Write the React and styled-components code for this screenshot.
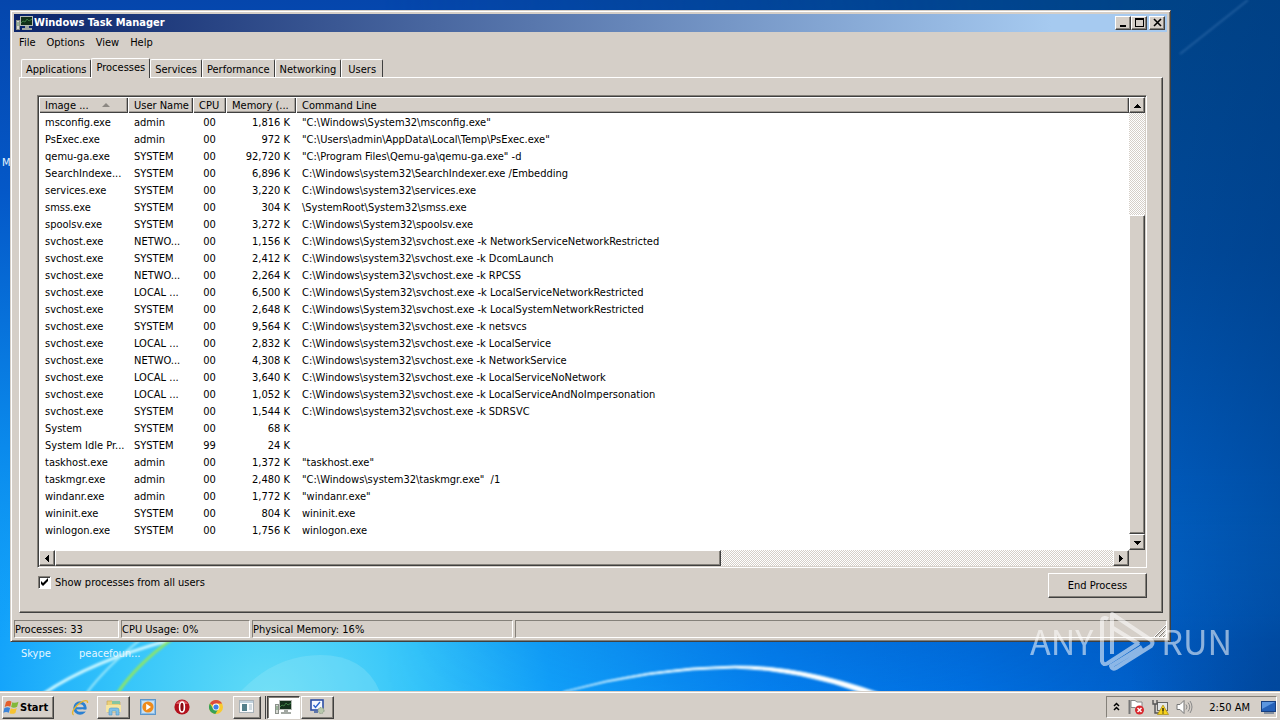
import React from "react";
import styled, { createGlobalStyle, css } from "styled-components";

const processes = [
  ["msconfig.exe", "admin", "00", "1,816 K", '"C:\\Windows\\System32\\msconfig.exe"'],
  ["PsExec.exe", "admin", "00", "972 K", '"C:\\Users\\admin\\AppData\\Local\\Temp\\PsExec.exe"'],
  ["qemu-ga.exe", "SYSTEM", "00", "92,720 K", '"C:\\Program Files\\Qemu-ga\\qemu-ga.exe" -d'],
  ["SearchIndexe...", "SYSTEM", "00", "6,896 K", "C:\\Windows\\system32\\SearchIndexer.exe /Embedding"],
  ["services.exe", "SYSTEM", "00", "3,220 K", "C:\\Windows\\system32\\services.exe"],
  ["smss.exe", "SYSTEM", "00", "304 K", "\\SystemRoot\\System32\\smss.exe"],
  ["spoolsv.exe", "SYSTEM", "00", "3,272 K", "C:\\Windows\\System32\\spoolsv.exe"],
  ["svchost.exe", "NETWO...", "00", "1,156 K", "C:\\Windows\\System32\\svchost.exe -k NetworkServiceNetworkRestricted"],
  ["svchost.exe", "SYSTEM", "00", "2,412 K", "C:\\Windows\\system32\\svchost.exe -k DcomLaunch"],
  ["svchost.exe", "NETWO...", "00", "2,264 K", "C:\\Windows\\system32\\svchost.exe -k RPCSS"],
  ["svchost.exe", "LOCAL ...", "00", "6,500 K", "C:\\Windows\\System32\\svchost.exe -k LocalServiceNetworkRestricted"],
  ["svchost.exe", "SYSTEM", "00", "2,648 K", "C:\\Windows\\System32\\svchost.exe -k LocalSystemNetworkRestricted"],
  ["svchost.exe", "SYSTEM", "00", "9,564 K", "C:\\Windows\\system32\\svchost.exe -k netsvcs"],
  ["svchost.exe", "LOCAL ...", "00", "2,832 K", "C:\\Windows\\system32\\svchost.exe -k LocalService"],
  ["svchost.exe", "NETWO...", "00", "4,308 K", "C:\\Windows\\system32\\svchost.exe -k NetworkService"],
  ["svchost.exe", "LOCAL ...", "00", "3,640 K", "C:\\Windows\\system32\\svchost.exe -k LocalServiceNoNetwork"],
  ["svchost.exe", "LOCAL ...", "00", "1,052 K", "C:\\Windows\\system32\\svchost.exe -k LocalServiceAndNoImpersonation"],
  ["svchost.exe", "SYSTEM", "00", "1,544 K", "C:\\Windows\\system32\\svchost.exe -k SDRSVC"],
  ["System", "SYSTEM", "00", "68 K", ""],
  ["System Idle Pr...", "SYSTEM", "99", "24 K", ""],
  ["taskhost.exe", "admin", "00", "1,372 K", '"taskhost.exe"'],
  ["taskmgr.exe", "admin", "00", "2,480 K", '"C:\\Windows\\system32\\taskmgr.exe"  /1'],
  ["windanr.exe", "admin", "00", "1,772 K", '"windanr.exe"'],
  ["wininit.exe", "SYSTEM", "00", "804 K", "wininit.exe"],
  ["winlogon.exe", "SYSTEM", "00", "1,756 K", "winlogon.exe"],
];

const tabs = ["Applications", "Processes", "Services", "Performance", "Networking", "Users"];

const Arrow = ({ d }) => (
  <svg width="7" height="7" viewBox="0 0 7 7" shapeRendering="crispEdges">
    <path d={d} fill="#000" />
  </svg>
);

const arrows = {
  up: "M3 2h1v1h1v1h1v1h1v1H0V5h1V4h1V3h1z",
  down: "M0 2h7v1H6v1H5v1H4v1H3V5H2V4H1V3H0z",
  left: "M1 3h1V2h1V1h1V0h1v7H4V6H3V5H2V4H1z",
  right: "M1 0h1v1h1v1h1v1h1v1H4v1H3v1H2v1H1z",
};

const TaskmgrIcon = () => (
  <svg width="18" height="16" viewBox="0 0 18 16">
    <rect x="0.5" y="5.5" width="3" height="9" fill="#d5d8d2" stroke="#8a908a" />
    <path d="M1 8h2M1 10h2" stroke="#5b8a5b" />
    <rect x="4.500" y="1.500" width="12" height="9" fill="#12301a" stroke="#b6bcb6" />
    <path d="M5 8l2-2 2 1 2-3 2 2 3-2" stroke="#3a7a42" fill="none" />
    <path d="M9 11h4v2h3v2H6v-2h3z" fill="#a2a8a2" />
  </svg>
);

const StartFlag = () => (
  <svg width="17" height="17" viewBox="0 0 17 17">
    <path d="M3 3c2-1.500 4-1.500 5.500-.3L7.300 7.800C5.600 6.800 4 6.900 1.700 8z" fill="#e5602c" />
    <path d="M9.300 3.200c2 1 4 .8 6.200-.4l-1.400 5c-2 1.100-4 1.200-6 .3z" fill="#82b83a" />
    <path d="M1.400 9c2-1 4-1.100 5.700 0l-1.300 4.800c-1.700-1-3.600-.9-5.500 0z" fill="#3c84d8" />
    <path d="M7.800 9.300c2 .9 4 .8 6-.3l-1.400 5c-2 1.100-4 1.100-5.900.2z" fill="#f7c331" />
  </svg>
);

const IeIcon = () => (
  <svg width="18" height="17" viewBox="0 0 18 17">
    <circle cx="9" cy="9" r="5.200" fill="none" stroke="#2a80d2" strokeWidth="3" />
    <path d="M5 9.300h9.500" stroke="#2a80d2" strokeWidth="2.200" />
    <path d="M10.500 10.600h6v2h-6z" fill="#d5d0c9" />
    <path d="M2.600 15.800C-.5 14.500 3.500 7.500 9.500 3.700 13 1.300 17 .4 16.500 4" fill="none" stroke="#e7b52c" strokeWidth="1.400" />
  </svg>
);

const ExplorerIcon = () => (
  <svg width="18" height="17" viewBox="0 0 18 17">
    <path d="M2 2h5l1 1h7v10H2z" fill="#ecd07a" stroke="#c3a14e" strokeWidth=".6" />
    <path d="M7 2h8v3H7z" fill="#86c5a0" />
    <path d="M1 6h15v7H1z" fill="#f7e6a2" />
    <path d="M4 16v-5q0-2 2-2h6q2 0 2 2v5h-3v-4H7v4z" fill="#7fc0e8" stroke="#4e98c9" strokeWidth=".6" />
  </svg>
);

const MediaIcon = () => (
  <svg width="16" height="16" viewBox="0 0 16 16">
    <rect x=".5" y=".5" width="15" height="15" fill="#8fbfe8" stroke="#5b96cb" />
    <rect x="2" y="2" width="12" height="12" fill="#c7e0f4" />
    <circle cx="8" cy="8" r="5.600" fill="#ee8b1c" />
    <path d="M6.200 4.800L11 8l-4.800 3.200z" fill="#fff" />
  </svg>
);

const OperaIcon = () => (
  <svg width="16" height="16" viewBox="0 0 16 16">
    <circle cx="8" cy="8" r="7.600" fill="#b3101c" />
    <path d="M2 5a7 7 0 0 1 12 0z" fill="#dc5960" />
    <ellipse cx="8" cy="8" rx="2.400" ry="5" fill="#8a0811" stroke="#fff" strokeWidth="1.600" />
  </svg>
);

const ChromeIcon = () => (
  <svg width="16" height="16" viewBox="0 0 16 16">
    <circle cx="8" cy="8" r="7" fill="#f8ca2f" />
    <path d="M8 8L1.900 4.500A7 7 0 0 1 14.100 4.500H8z" fill="#dd4b3b" />
    <path d="M1.900 4.500A7 7 0 0 0 7.300 15L10 10.500 5 9.500z" fill="#35a156" />
    <circle cx="8" cy="8" r="3.400" fill="#fff" />
    <circle cx="8" cy="8" r="2.600" fill="#3f80e6" />
  </svg>
);

const ConsoleIcon = () => (
  <svg width="16" height="14" viewBox="0 0 16 14">
    <rect x=".5" y=".5" width="14" height="12" fill="#fafcfd" stroke="#a8b2b8" />
    <path d="M1 1h13v2H1z" fill="#bfd0dc" />
    <rect x="3" y="4" width="5" height="7" fill="#537f8b" />
    <path d="M10 5h3M10 7h3M10 9h3" stroke="#a5b8c2" />
  </svg>
);

const ConfigIcon = () => (
  <svg width="18" height="16" viewBox="0 0 18 16">
    <rect x="2" y="1" width="12" height="10" fill="#f5f8ff" stroke="#2c4ea5" strokeWidth="1.600" />
    <path d="M4.500 6l2 2.500L11 3" fill="none" stroke="#2b63cf" strokeWidth="1.400" />
    <circle cx="12" cy="11.500" r="3" fill="#b9c8ac" stroke="#8b9d86" strokeDasharray="1.500 1" />
    <path d="M5 13h4" stroke="#6077a8" strokeWidth="2" />
  </svg>
);

const ChevronIcon = () => (
  <svg width="8" height="10" viewBox="0 0 8 10">
    <path d="M1 4l2.500-2.500L6 4M1 8l2.500-2.500L6 8" fill="none" stroke="#000" strokeWidth="1.500" />
  </svg>
);

const FlagIcon = () => (
  <svg width="17" height="16" viewBox="0 0 17 16">
    <path d="M1.500 1v14" stroke="#777" strokeWidth="2" />
    <path d="M3 1.500h4l2 1.500h5v7H9L7 8.500H3z" fill="#fff" stroke="#888" />
    <circle cx="11.500" cy="11" r="4.500" fill="#d8272c" />
    <path d="M9.500 9l4 4m0-4l-4 4" stroke="#fff" strokeWidth="1.500" />
  </svg>
);

const NetworkIcon = () => (
  <svg width="17" height="16" viewBox="0 0 17 16">
    <rect x="5.500" y="3.500" width="10" height="8" fill="#e5e7e7" stroke="#666" />
    <path d="M1 1v4h4V1M3 5v9h4" fill="none" stroke="#555" strokeWidth="1.400" />
    <path d="M11 6l5.500 9.500h-11z" fill="#f7d21c" stroke="#a58a11" strokeWidth=".7" />
    <path d="M11 9v3.500m0 1v1" stroke="#111" strokeWidth="1.300" />
  </svg>
);

const SpeakerIcon = () => (
  <svg width="17" height="16" viewBox="0 0 17 16">
    <path d="M1 5.500h3L8 1.500v13l-4-4H1z" fill="#fff" stroke="#777" />
    <path d="M10 5.500q2 2.500 0 5M12 3.500q3.500 4.500 0 9M14 2q4 6 0 12" fill="none" stroke="#888" />
  </svg>
);

const DesktopIcon = () => (
  <svg width="15" height="14" viewBox="0 0 15 14">
    <rect x=".5" y="1.500" width="14" height="10" fill="#2460b8" stroke="#173f80" />
    <path d="M1 2h13L1 9z" fill="#5b95df" />
    <path d="M3 13h10" stroke="#35527b" />
  </svg>
);

const Wallpaper = () => (
  <WallpaperSvg viewBox="0 0 1280 720" preserveAspectRatio="none" aria-hidden="true">
    <defs>
      <radialGradient id="glow" gradientUnits="userSpaceOnUse" cx="270" cy="700" r="1000">
        <stop offset="0" stopColor="#62dcf6" />
        <stop offset="0.15" stopColor="#35c5fa" />
        <stop offset="0.28" stopColor="#12a2fb" />
        <stop offset="0.5" stopColor="#0583f3" />
        <stop offset="0.7" stopColor="#0173e6" />
        <stop offset="0.88" stopColor="#0160cb" />
        <stop offset="1" stopColor="#014fae" />
      </radialGradient>
      <linearGradient id="side" x1="0" y1="0" x2="0" y2="1">
        <stop offset="0" stopColor="#0546ac" />
        <stop offset="0.3" stopColor="#0458c8" />
        <stop offset="0.7" stopColor="#0a8aec" />
        <stop offset="1" stopColor="#12a0f4" stopOpacity="0" />
      </linearGradient>
      <linearGradient id="dusk" x1="0" y1="0" x2="0" y2="1">
        <stop offset="0" stopColor="#004488" />
        <stop offset="0.35" stopColor="#004a9c" />
        <stop offset="0.65" stopColor="#005abc" />
        <stop offset="0.85" stopColor="#005cc2" stopOpacity="0.7" />
        <stop offset="1" stopColor="#0058bc" stopOpacity="0" />
      </linearGradient>
      <linearGradient id="fade">
        <stop offset="0.3" stopColor="#000" />
        <stop offset="0.88" stopColor="#fff" />
      </linearGradient>
      <linearGradient id="edge">
        <stop offset="0" stopColor="#003a80" stopOpacity="0" />
        <stop offset="1" stopColor="#003a80" stopOpacity="0.4" />
      </linearGradient>
      <mask id="right">
        <rect width="1280" height="720" fill="url(#fade)" />
      </mask>
      <filter id="soft"><feGaussianBlur stdDeviation="1" /></filter>
    </defs>
    <rect width="1280" height="720" fill="url(#glow)" />
    <rect width="1280" height="640" fill="url(#side)" />
    <rect width="1280" height="720" fill="url(#dusk)" mask="url(#right)" />
    <rect x="1130" width="150" height="720" fill="url(#edge)" />
    <path d="M1180 54L1248 0" stroke="#4d83bd" strokeWidth="2" opacity=".4" filter="url(#soft)" />
    <path d="M240 692Q275 655 320 655T380 692z" fill="#a6ecf6" opacity=".25" />
    <g fill="none" filter="url(#soft)">
      <path d="M43 694Q90 662 170 640" stroke="#c8f6ff" strokeWidth="3" />
      <path d="M86 694Q105 668 140 640" stroke="#9de9fa" strokeWidth="2" />
      <path d="M117 694Q135 666 172 639" stroke="#8ae56c" strokeWidth="3" />
    </g>
    <path d="M563 692Q650 667 735 666Q800 665 882 694L866 694Q800 670 735 668Q650 669 563 692" fill="#fff" stroke="#d6f3ff" strokeWidth="1" filter="url(#soft)" />
  </WallpaperSvg>
);

const Watermark = () => (
  <Brand>
    <BrandText>ANY</BrandText>
    <svg width="56" height="62" viewBox="0 0 56 62">
      <g fill="none" stroke="#fff" strokeWidth="4" strokeLinejoin="round">
        <path d="M9 9Q3 6 3 12V51Q4 56 9 53L40 33" />
        <path d="M13 44V4L52 30Q55 33 52 36L17 58Q13 60 12 56L43 37" />
        <path d="M14 18L40 34" />
      </g>
    </svg>
    <BrandText>RUN</BrandText>
  </Brand>
);

const App = () => {
  return (
    <Screen>
      <GlobalStyle />
      <Desktop>
        <Wallpaper />
        <DesktopLabel $left={2} $top={156}>M</DesktopLabel>
        <Window>
          <TitleBar>
            <TaskmgrIcon />
            <Title>Windows Task Manager</Title>
            <Caption aria-label="Minimize">
              <svg width="12" height="10" shapeRendering="crispEdges"><path d="M3 7h6v2H3z" /></svg>
            </Caption>
            <Caption aria-label="Maximize">
              <svg width="12" height="10" shapeRendering="crispEdges"><path d="M2 0h9v9H2zM3 2v6h7V2z" fillRule="evenodd" /></svg>
            </Caption>
            <Caption aria-label="Close" $apart>
              <svg width="12" height="10"><path d="M3 1l7 7M10 1L3 8" stroke="#000" strokeWidth="1.600" /></svg>
            </Caption>
          </TitleBar>
          <Menu>
            {["File", "Options", "View", "Help"].map((name) => (
              <MenuItem key={name}>{name}</MenuItem>
            ))}
          </Menu>
          <Tabs role="tablist">
            {tabs.map((name) => (
              <Tab key={name} role="tab" aria-selected={name === "Processes"} $active={name === "Processes"}>
                {name}
              </Tab>
            ))}
          </Tabs>
          <Page>
            <ListView>
              <ListBody>
                <Table>
                  <colgroup>
                    <Col $width={89} />
                    <Col $width={65} />
                    <Col $width={33} />
                    <Col $width={70} />
                    <col />
                  </colgroup>
                  <thead>
                    <tr>
                      <Th>
                        Image ...
                        <SortMark width="8" height="4" viewBox="0 0 8 4"><path d="M4 0l4 4H0z" fill="#8b8782" /></SortMark>
                      </Th>
                      <Th>User Name</Th>
                      <Th>CPU</Th>
                      <Th>Memory (...</Th>
                      <Th>Command Line</Th>
                    </tr>
                  </thead>
                  <tbody>
                    {processes.map(([image, user, cpu, memory, command], index) => (
                      <tr key={index}>
                        <Td>{image}</Td>
                        <Td>{user}</Td>
                        <Td $align="center">{cpu}</Td>
                        <Td $align="right">{memory}</Td>
                        <Td>{command}</Td>
                      </tr>
                    ))}
                  </tbody>
                </Table>
                <VScroll>
                  <ScrollButton aria-label="Scroll up"><Arrow d={arrows.up} /></ScrollButton>
                  <Track $grow={102} />
                  <Thumb $grow={319} />
                  <ScrollButton aria-label="Scroll down"><Arrow d={arrows.down} /></ScrollButton>
                </VScroll>
              </ListBody>
              <HScroll>
                <ScrollButton aria-label="Scroll left"><Arrow d={arrows.left} /></ScrollButton>
                <Thumb $grow={665} />
                <Track $grow={393} />
                <ScrollButton aria-label="Scroll right"><Arrow d={arrows.right} /></ScrollButton>
                <Corner />
              </HScroll>
            </ListView>
            <Actions>
              <CheckLabel>
                <Checkbox type="checkbox" defaultChecked />
                Show processes from all users
              </CheckLabel>
              <PushButton>End Process</PushButton>
            </Actions>
          </Page>
          <StatusBar>
            <StatusPanel $width={105}>Processes: 33</StatusPanel>
            <StatusPanel $width={129}>CPU Usage: 0%</StatusPanel>
            <StatusPanel $width={261}>Physical Memory: 16%</StatusPanel>
            <StatusPanel>
              <Grip width="12" height="12" viewBox="0 0 12 12">
                <path d="M0 12L12 0M4 12l8-8M8 12l4-4" stroke="#fff" />
                <path d="M1 12L12 1M5 12l7-7M9 12l3-3" stroke="#7b7772" />
              </Grip>
            </StatusPanel>
          </StatusBar>
        </Window>
        <DesktopLabel $left={21} $top={647}>Skype</DesktopLabel>
        <DesktopLabel $left={79} $top={647}>peacefoun...</DesktopLabel>
        <Watermark />
      </Desktop>
      <Taskbar>
        <StartButton><StartFlag />Start</StartButton>
        <TaskItems>
          <TaskButton aria-label="Internet Explorer"><IeIcon /></TaskButton>
          <TaskButton aria-label="Explorer" $state="open"><ExplorerIcon /></TaskButton>
          <TaskButton aria-label="Media Player"><MediaIcon /></TaskButton>
          <TaskButton aria-label="Opera"><OperaIcon /></TaskButton>
          <TaskButton aria-label="Chrome"><ChromeIcon /></TaskButton>
          <TaskStack>
            <TaskButton aria-label="Console" $state="open"><ConsoleIcon /></TaskButton>
          </TaskStack>
          <TaskButton aria-label="Task Manager" $state="active"><TaskmgrIcon /></TaskButton>
          <TaskButton aria-label="System Configuration" $state="open"><ConfigIcon /></TaskButton>
        </TaskItems>
        <Tray>
          <ChevronIcon />
          <FlagIcon />
          <NetworkIcon />
          <SpeakerIcon />
          <Clock>2:50 AM</Clock>
          <DesktopIcon />
        </Tray>
      </Taskbar>
    </Screen>
  );
};

export default App;

const raised = css`
  border: 1px solid;
  border-color: #fff #404040 #404040 #fff;
  box-shadow: inset -1px -1px 0 #848079;
`;

const GlobalStyle = createGlobalStyle`
  * {
    box-sizing: border-box;
  }
  body {
    margin: 0;
    font-family: Tahoma, "DejaVu Sans Condensed", "DejaVu Sans", sans-serif;
    font-size: 11px;
    color: #000;
  }
  button {
    font: inherit;
    color: inherit;
    padding: 0;
    background: #d5cfc8;
    border: 0;
  }
  svg {
    flex: none;
  }
`;

const Screen = styled.div`
  min-height: 100vh;
  display: flex;
  flex-direction: column;
`;

const Desktop = styled.main`
  position: relative;
  flex: 1;
  overflow: hidden;
  background: #0a6fd8;
`;

const WallpaperSvg = styled.svg`
  position: absolute;
  inset: 0;
  width: 100%;
  height: 100vh;
`;

const DesktopLabel = styled.span`
  position: absolute;
  left: ${(props) => props.$left}px;
  top: ${(props) => props.$top}px;
  line-height: 14px;
  color: #e4f6ff;
`;

const Window = styled.section`
  position: relative;
  margin: 10px 109px 0 10px;
  padding: 3px;
  background: #d5cfc8;
  border: 1px solid;
  border-color: #d5cfc8 #404040 #404040 #d5cfc8;
  box-shadow: inset 1px 1px 0 #fff, inset -1px -1px 0 #848079;
`;

const TitleBar = styled.header`
  display: flex;
  align-items: center;
  height: 18px;
  padding: 0 2px;
  background: linear-gradient(90deg, #0a246a, #a6caf0 90%);
`;

const Title = styled.h1`
  flex: 1;
  margin: 0;
  font-size: 11px;
  line-height: 18px;
  color: #fff;
`;

const Caption = styled.button`
  ${raised}
  display: flex;
  align-items: center;
  justify-content: center;
  width: 16px;
  height: 14px;
  margin-left: ${(props) => (props.$apart ? 2 : 0)}px;
`;

const Menu = styled.nav`
  display: flex;
  gap: 11px;
  height: 26px;
  padding: 0 5px;
`;

const MenuItem = styled.button`
  height: 20px;
`;

const Tabs = styled.div`
  display: flex;
  align-items: flex-end;
  height: 19px;
  padding-left: 7px;
`;

const Tab = styled.button`
  position: relative;
  height: ${(props) => (props.$active ? 20 : 18)}px;
  min-width: 42px;
  margin-bottom: ${(props) => (props.$active ? -1 : 0)}px;
  padding: ${(props) => (props.$active ? "0 4px 2px" : "1px 4px 0")};
  border: 1px solid;
  border-color: #fff #404040 transparent #fff;
  border-bottom: 0;
  border-radius: 2px 2px 0 0;
  z-index: ${(props) => (props.$active ? 1 : 0)};
`;

const Page = styled.div`
  margin: 0 4px 0 5px;
  padding: 17px 15px 14px 17px;
  border: 1px solid;
  border-color: #fff #404040 #404040 #fff;
  box-shadow: inset -1px -1px 0 #848079;
`;

const ListView = styled.div`
  padding: 1px;
  border: 1px solid;
  border-color: #848079 #fff #fff #848079;
  box-shadow: inset 1px 1px 0 #404040;
`;

const ListBody = styled.div`
  display: flex;
  background: #fff;
`;

const Table = styled.table`
  flex: 1;
  align-self: flex-start;
  width: 100%;
  min-width: 0;
  margin-bottom: 12px;
  table-layout: fixed;
  border-collapse: collapse;
`;

const Col = styled.col`
  width: ${(props) => props.$width}px;
`;

const Th = styled.th`
  height: 16px;
  padding: 1px 6px 0;
  font-weight: normal;
  line-height: 15px;
  text-align: left;
  white-space: nowrap;
  background: #d5cfc8;
  box-shadow: inset 1px 1px 0 #fff, inset -1px -1px 0 #404040, inset -2px -2px 0 #a5a09a;
`;

const SortMark = styled.svg`
  margin: 0 0 2px 13px;
`;

const Td = styled.td`
  height: 17px;
  padding: 2px 6px 0;
  line-height: 15px;
  text-align: ${(props) => props.$align || "left"};
  white-space: pre;
`;

const VScroll = styled.div`
  display: flex;
  flex: none;
  flex-direction: column;
  width: 16px;
`;

const HScroll = styled.div`
  display: flex;
  height: 16px;
`;

const ScrollButton = styled.button`
  ${raised}
  display: flex;
  align-items: center;
  justify-content: center;
  width: 16px;
  height: 16px;
`;

const Track = styled.div`
  flex: ${(props) => props.$grow} 1 0;
  background: repeating-conic-gradient(#fff 0 25%, #d5cfc8 0 50%) 0 0 / 2px 2px;
`;

const Thumb = styled.div`
  ${raised}
  flex: ${(props) => props.$grow} 1 0;
  background: #d5cfc8;
`;

const Corner = styled.div`
  width: 16px;
  background: #d5cfc8;
`;

const Actions = styled.div`
  display: flex;
  justify-content: space-between;
  padding-top: 5px;
`;

const CheckLabel = styled.label`
  display: flex;
  align-items: center;
  gap: 4px;
  height: 18px;
  padding-left: 1px;
`;

const Checkbox = styled.input`
  appearance: none;
  width: 13px;
  height: 13px;
  margin: 0;
  border: 1px solid;
  border-color: #848079 #fff #fff #848079;
  box-shadow: inset 1px 1px 0 #404040;
  background: #fff;
  &:checked {
    background: #fff
      url("data:image/svg+xml,%3Csvg xmlns='http://www.w3.org/2000/svg' viewBox='0 0 11 11'%3E%3Cpath d='M2 4v3l2 2 5-5V1L4 6z'/%3E%3C/svg%3E");
  }
`;

const PushButton = styled.button`
  ${raised}
  width: 99px;
  height: 25px;
`;

const StatusBar = styled.footer`
  display: flex;
  gap: 2px;
  padding-top: 7px;
`;

const StatusPanel = styled.div`
  display: flex;
  ${(props) => (props.$width ? `width: ${props.$width}px;` : "flex: 1;")}
  height: 18px;
  line-height: 18px;
  border: 1px solid;
  border-color: #848079 #fff #fff #848079;
`;

const Grip = styled.svg`
  align-self: flex-end;
  margin-left: auto;
`;

const Brand = styled.div`
  position: absolute;
  right: 48px;
  bottom: 19px;
  display: flex;
  align-items: center;
  gap: 6px;
  opacity: 0.55;
  pointer-events: none;
`;

const BrandText = styled.span`
  font-family: "Noto Sans CJK SC", Roboto, sans-serif;
  font-size: 34px;
  line-height: 52px;
  color: #fff;
`;

const Taskbar = styled.footer`
  position: relative;
  display: flex;
  align-items: center;
  height: 29px;
  padding: 3px 3px 0 2px;
  background: #d5cfc8;
  box-shadow: inset 0 1px 0 #d5cfc8, inset 0 2px 0 #fff;
`;

const StartButton = styled.button`
  ${raised}
  display: flex;
  align-items: center;
  width: 52px;
  height: 23px;
  font-size: 11px;
  font-weight: bold;
`;

const TaskItems = styled.div`
  display: flex;
  flex: 1;
  gap: 1px;
  padding-left: 9px;
`;

const TaskButton = styled.button`
  display: flex;
  align-items: center;
  justify-content: center;
  width: 33px;
  height: 23px;
  ${(props) => props.$state && raised}
  ${(props) =>
    props.$state === "active" &&
    css`
      background: #fff;
      border-color: #404040 #fff #fff #404040;
      box-shadow: inset 1px 1px 0 #848079;
    `}
`;

const TaskStack = styled.div`
  display: flex;
  width: 33px;
  padding-right: 4px;
  border-right: 1px solid #404040;
`;

const Tray = styled.div`
  display: flex;
  align-items: center;
  gap: 7px;
  height: 22px;
  padding-left: 6px;
  border: 1px solid;
  border-color: #848079 #fff #fff #848079;
`;

const Clock = styled.time`
  padding: 0 4px 0 9px;
`;
